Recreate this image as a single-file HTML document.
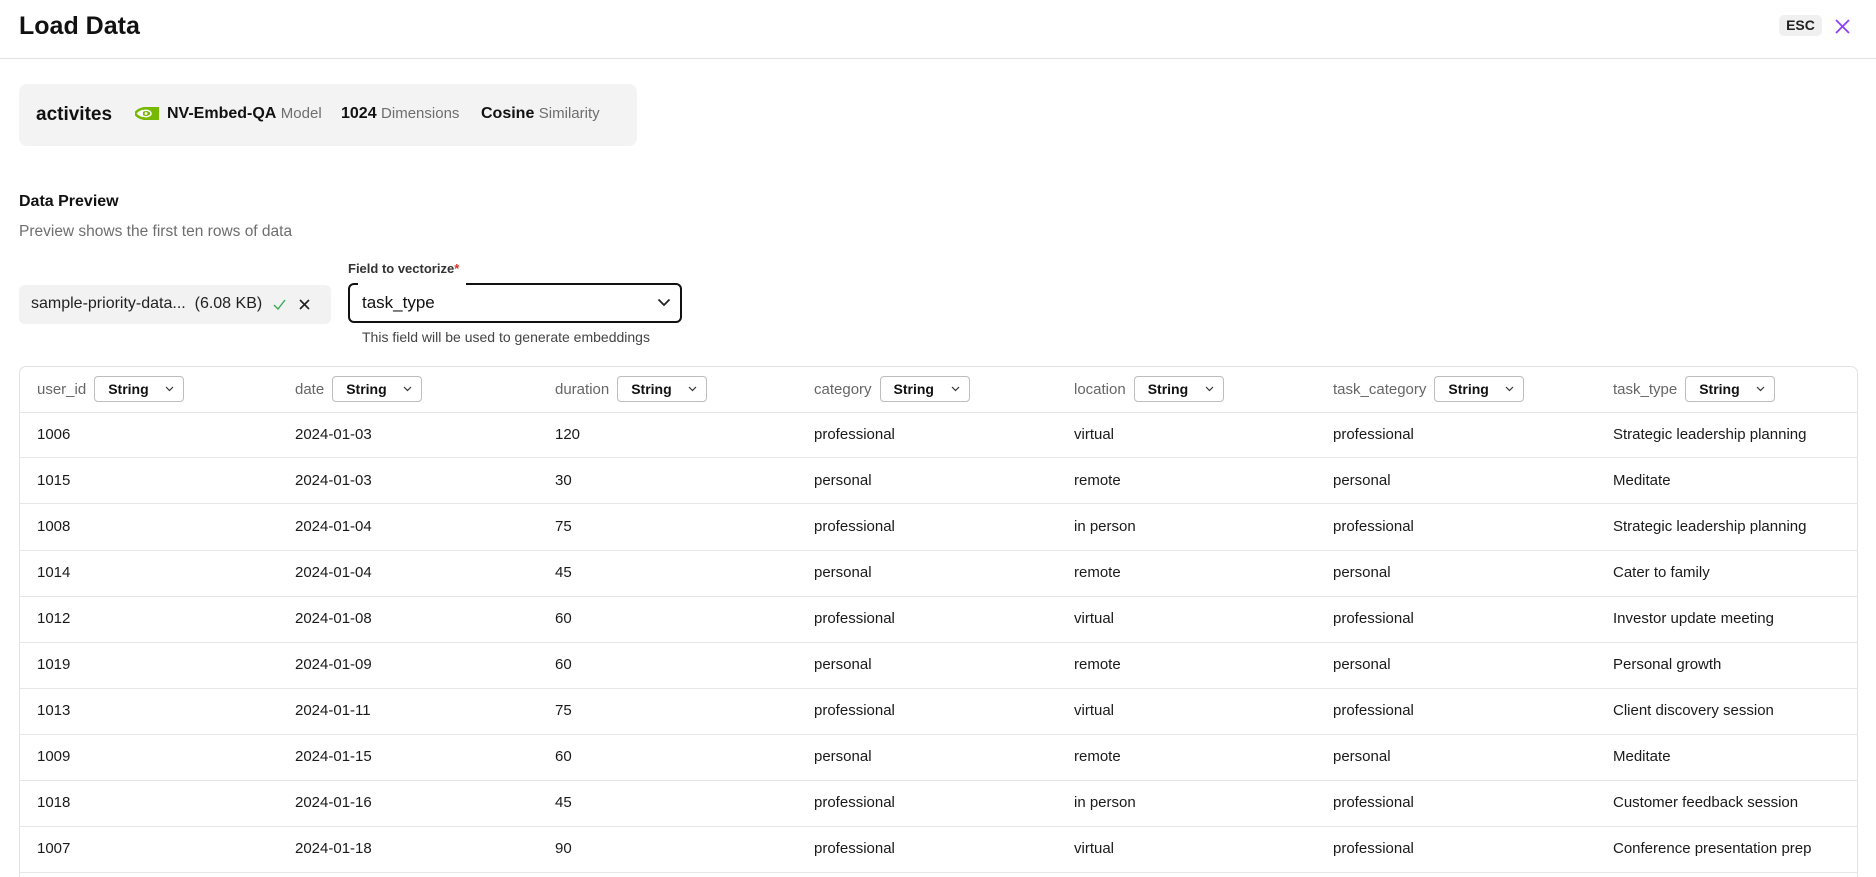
<!DOCTYPE html>
<html style="overflow:hidden;width:1876px;height:877px"><head><meta charset="utf-8"><style>
*{margin:0;padding:0;box-sizing:border-box}
body{width:1876px;height:877px;overflow:hidden;background:#fff;font-family:"Liberation Sans",Arial,sans-serif;color:#1a1a1a;position:relative}
.a{position:absolute;white-space:nowrap}
.title{left:19px;top:12px;font-size:25px;font-weight:600;color:#111}
.esc{left:1779px;top:15px;width:43px;height:21px;background:#f0f0f0;border-radius:5px;font-size:14px;font-weight:600;text-align:center;line-height:21px;color:#222}
.hline{left:0;top:58px;width:1876px;height:1px;background:#e2e2e2}
.info{left:19px;top:84px;width:618px;height:62px;background:#f3f3f3;border-radius:8px}
.b{font-weight:700;color:#111}
.g{color:#6e6e6e;font-weight:400}
.tbl{left:19px;top:366px;width:1839px;height:530px;border:1px solid #e2e2e2;border-radius:7px}
.rl{position:absolute;left:19px;width:1839px;height:1px;background:#e6e6e6}
.hd{position:absolute;top:376px;display:flex;align-items:center;gap:8px;font-size:15px;color:#666}
.dd{width:90px;height:26px;border:1px solid #bdbdbd;border-radius:4px;display:flex;align-items:center;justify-content:space-between;padding:0 9px 0 13px;font-size:14px;font-weight:600;color:#111}
.cell{position:absolute;font-size:15px;color:#1a1a1a;white-space:nowrap}
</style></head><body>
<div class="a title">Load Data</div>
<div class="a esc">ESC</div>
<svg class="a" style="left:1835px;top:19px" width="15" height="15" viewBox="0 0 15 15"><path d="M1 1L14 14M14 1L1 14" stroke="#8a3ffc" stroke-width="1.8"/></svg>
<div class="a hline"></div>

<div class="a info"></div>
<div class="a b" style="left:36px;top:104px;font-size:19px">activites</div>
<svg class="a" style="left:135px;top:107px" width="24" height="13" viewBox="0 0 24 13"><rect x="8" y="0" width="16" height="13" fill="#76b900"/><path d="M0 6.5C4 1 11 0 17 3" stroke="#76b900" stroke-width="2.5" fill="none"/><path d="M0 6.5C4 12 11 13 17 10" stroke="#76b900" stroke-width="2.5" fill="none"/><ellipse cx="11" cy="6.5" rx="5" ry="3.2" fill="none" stroke="#fff" stroke-width="1.5"/><circle cx="11" cy="6.5" r="1.4" fill="#fff"/></svg>
<div class="a" style="left:167px;top:105px;font-size:16px"><span class="b">NV-Embed-QA</span> <span class="g" style="font-size:15px">Model</span></div>
<div class="a" style="left:341px;top:105px;font-size:16px"><span class="b">1024</span> <span class="g" style="font-size:15px">Dimensions</span></div>
<div class="a" style="left:481px;top:105px;font-size:16px"><span class="b">Cosine</span> <span class="g" style="font-size:15px">Similarity</span></div>

<div class="a" style="left:19px;top:193px;font-size:16px;font-weight:600;color:#111">Data Preview</div>
<div class="a" style="left:19px;top:223px;font-size:15.5px;color:#6e6e6e">Preview shows the first ten rows of data</div>

<div class="a" style="left:348px;top:261px;font-size:13px;font-weight:600;color:#333">Field to vectorize<span style="color:#d93025">*</span></div>
<div class="a" style="left:19px;top:285px;width:312px;height:39px;background:#f2f2f2;border-radius:6px"></div>
<div class="a" style="left:31px;top:295px;font-size:16px;color:#222">sample-priority-data...&nbsp;&nbsp;(6.08 KB)</div>
<svg class="a" style="left:273px;top:299px" width="13" height="11" viewBox="0 0 13 11"><path d="M1 6l4 4 7-9" stroke="#3aa757" stroke-width="1.4" fill="none"/></svg>
<svg class="a" style="left:299px;top:299px" width="11" height="11" viewBox="0 0 11 11"><path d="M1 1l9 9M10 1l-9 9" stroke="#222" stroke-width="1.6"/></svg>

<div class="a" style="left:348px;top:283px;width:334px;height:40px;border:2px solid #111;border-radius:6px"></div>
<div class="a" style="left:358px;top:282px;width:108px;height:3px;background:#fff"></div>
<div class="a" style="left:362px;top:293px;font-size:17px;color:#111">task_type</div>
<svg class="a" style="left:657px;top:298px" width="14" height="9" viewBox="0 0 14 9"><path d="M1.5 1.5l5.5 5.5 5.5-5.5" stroke="#222" stroke-width="1.8" fill="none"/></svg>
<div class="a" style="left:362px;top:329px;font-size:14px;color:#444">This field will be used to generate embeddings</div>

<div class="a tbl"></div>
<div class="rl" style="top:412px"></div>
<div class="rl" style="top:457px"></div>
<div class="rl" style="top:503px"></div>
<div class="rl" style="top:550px"></div>
<div class="rl" style="top:596px"></div>
<div class="rl" style="top:642px"></div>
<div class="rl" style="top:688px"></div>
<div class="rl" style="top:734px"></div>
<div class="rl" style="top:780px"></div>
<div class="rl" style="top:826px"></div>
<div class="rl" style="top:872px"></div>

<div class="hd" style="left:37px">user_id<div class="dd">String<svg width="9" height="6" viewBox="0 0 9 6"><path d="M1 1l3.5 3.5L8 1" stroke="#333" stroke-width="1.2" fill="none"/></svg></div></div>
<div class="hd" style="left:295px">date<div class="dd">String<svg width="9" height="6" viewBox="0 0 9 6"><path d="M1 1l3.5 3.5L8 1" stroke="#333" stroke-width="1.2" fill="none"/></svg></div></div>
<div class="hd" style="left:555px">duration<div class="dd">String<svg width="9" height="6" viewBox="0 0 9 6"><path d="M1 1l3.5 3.5L8 1" stroke="#333" stroke-width="1.2" fill="none"/></svg></div></div>
<div class="hd" style="left:814px">category<div class="dd">String<svg width="9" height="6" viewBox="0 0 9 6"><path d="M1 1l3.5 3.5L8 1" stroke="#333" stroke-width="1.2" fill="none"/></svg></div></div>
<div class="hd" style="left:1074px">location<div class="dd">String<svg width="9" height="6" viewBox="0 0 9 6"><path d="M1 1l3.5 3.5L8 1" stroke="#333" stroke-width="1.2" fill="none"/></svg></div></div>
<div class="hd" style="left:1333px">task_category<div class="dd">String<svg width="9" height="6" viewBox="0 0 9 6"><path d="M1 1l3.5 3.5L8 1" stroke="#333" stroke-width="1.2" fill="none"/></svg></div></div>
<div class="hd" style="left:1613px">task_type<div class="dd">String<svg width="9" height="6" viewBox="0 0 9 6"><path d="M1 1l3.5 3.5L8 1" stroke="#333" stroke-width="1.2" fill="none"/></svg></div></div>

<div class="cell" style="left:37px;top:426px">1006</div><div class="cell" style="left:295px;top:426px">2024-01-03</div><div class="cell" style="left:555px;top:426px">120</div><div class="cell" style="left:814px;top:426px">professional</div><div class="cell" style="left:1074px;top:426px">virtual</div><div class="cell" style="left:1333px;top:426px">professional</div><div class="cell" style="left:1613px;top:426px">Strategic leadership planning</div>
<div class="cell" style="left:37px;top:472px">1015</div><div class="cell" style="left:295px;top:472px">2024-01-03</div><div class="cell" style="left:555px;top:472px">30</div><div class="cell" style="left:814px;top:472px">personal</div><div class="cell" style="left:1074px;top:472px">remote</div><div class="cell" style="left:1333px;top:472px">personal</div><div class="cell" style="left:1613px;top:472px">Meditate</div>
<div class="cell" style="left:37px;top:518px">1008</div><div class="cell" style="left:295px;top:518px">2024-01-04</div><div class="cell" style="left:555px;top:518px">75</div><div class="cell" style="left:814px;top:518px">professional</div><div class="cell" style="left:1074px;top:518px">in person</div><div class="cell" style="left:1333px;top:518px">professional</div><div class="cell" style="left:1613px;top:518px">Strategic leadership planning</div>
<div class="cell" style="left:37px;top:564px">1014</div><div class="cell" style="left:295px;top:564px">2024-01-04</div><div class="cell" style="left:555px;top:564px">45</div><div class="cell" style="left:814px;top:564px">personal</div><div class="cell" style="left:1074px;top:564px">remote</div><div class="cell" style="left:1333px;top:564px">personal</div><div class="cell" style="left:1613px;top:564px">Cater to family</div>
<div class="cell" style="left:37px;top:610px">1012</div><div class="cell" style="left:295px;top:610px">2024-01-08</div><div class="cell" style="left:555px;top:610px">60</div><div class="cell" style="left:814px;top:610px">professional</div><div class="cell" style="left:1074px;top:610px">virtual</div><div class="cell" style="left:1333px;top:610px">professional</div><div class="cell" style="left:1613px;top:610px">Investor update meeting</div>
<div class="cell" style="left:37px;top:656px">1019</div><div class="cell" style="left:295px;top:656px">2024-01-09</div><div class="cell" style="left:555px;top:656px">60</div><div class="cell" style="left:814px;top:656px">personal</div><div class="cell" style="left:1074px;top:656px">remote</div><div class="cell" style="left:1333px;top:656px">personal</div><div class="cell" style="left:1613px;top:656px">Personal growth</div>
<div class="cell" style="left:37px;top:702px">1013</div><div class="cell" style="left:295px;top:702px">2024-01-11</div><div class="cell" style="left:555px;top:702px">75</div><div class="cell" style="left:814px;top:702px">professional</div><div class="cell" style="left:1074px;top:702px">virtual</div><div class="cell" style="left:1333px;top:702px">professional</div><div class="cell" style="left:1613px;top:702px">Client discovery session</div>
<div class="cell" style="left:37px;top:748px">1009</div><div class="cell" style="left:295px;top:748px">2024-01-15</div><div class="cell" style="left:555px;top:748px">60</div><div class="cell" style="left:814px;top:748px">personal</div><div class="cell" style="left:1074px;top:748px">remote</div><div class="cell" style="left:1333px;top:748px">personal</div><div class="cell" style="left:1613px;top:748px">Meditate</div>
<div class="cell" style="left:37px;top:794px">1018</div><div class="cell" style="left:295px;top:794px">2024-01-16</div><div class="cell" style="left:555px;top:794px">45</div><div class="cell" style="left:814px;top:794px">professional</div><div class="cell" style="left:1074px;top:794px">in person</div><div class="cell" style="left:1333px;top:794px">professional</div><div class="cell" style="left:1613px;top:794px">Customer feedback session</div>
<div class="cell" style="left:37px;top:840px">1007</div><div class="cell" style="left:295px;top:840px">2024-01-18</div><div class="cell" style="left:555px;top:840px">90</div><div class="cell" style="left:814px;top:840px">professional</div><div class="cell" style="left:1074px;top:840px">virtual</div><div class="cell" style="left:1333px;top:840px">professional</div><div class="cell" style="left:1613px;top:840px">Conference presentation prep</div>
</body></html>
